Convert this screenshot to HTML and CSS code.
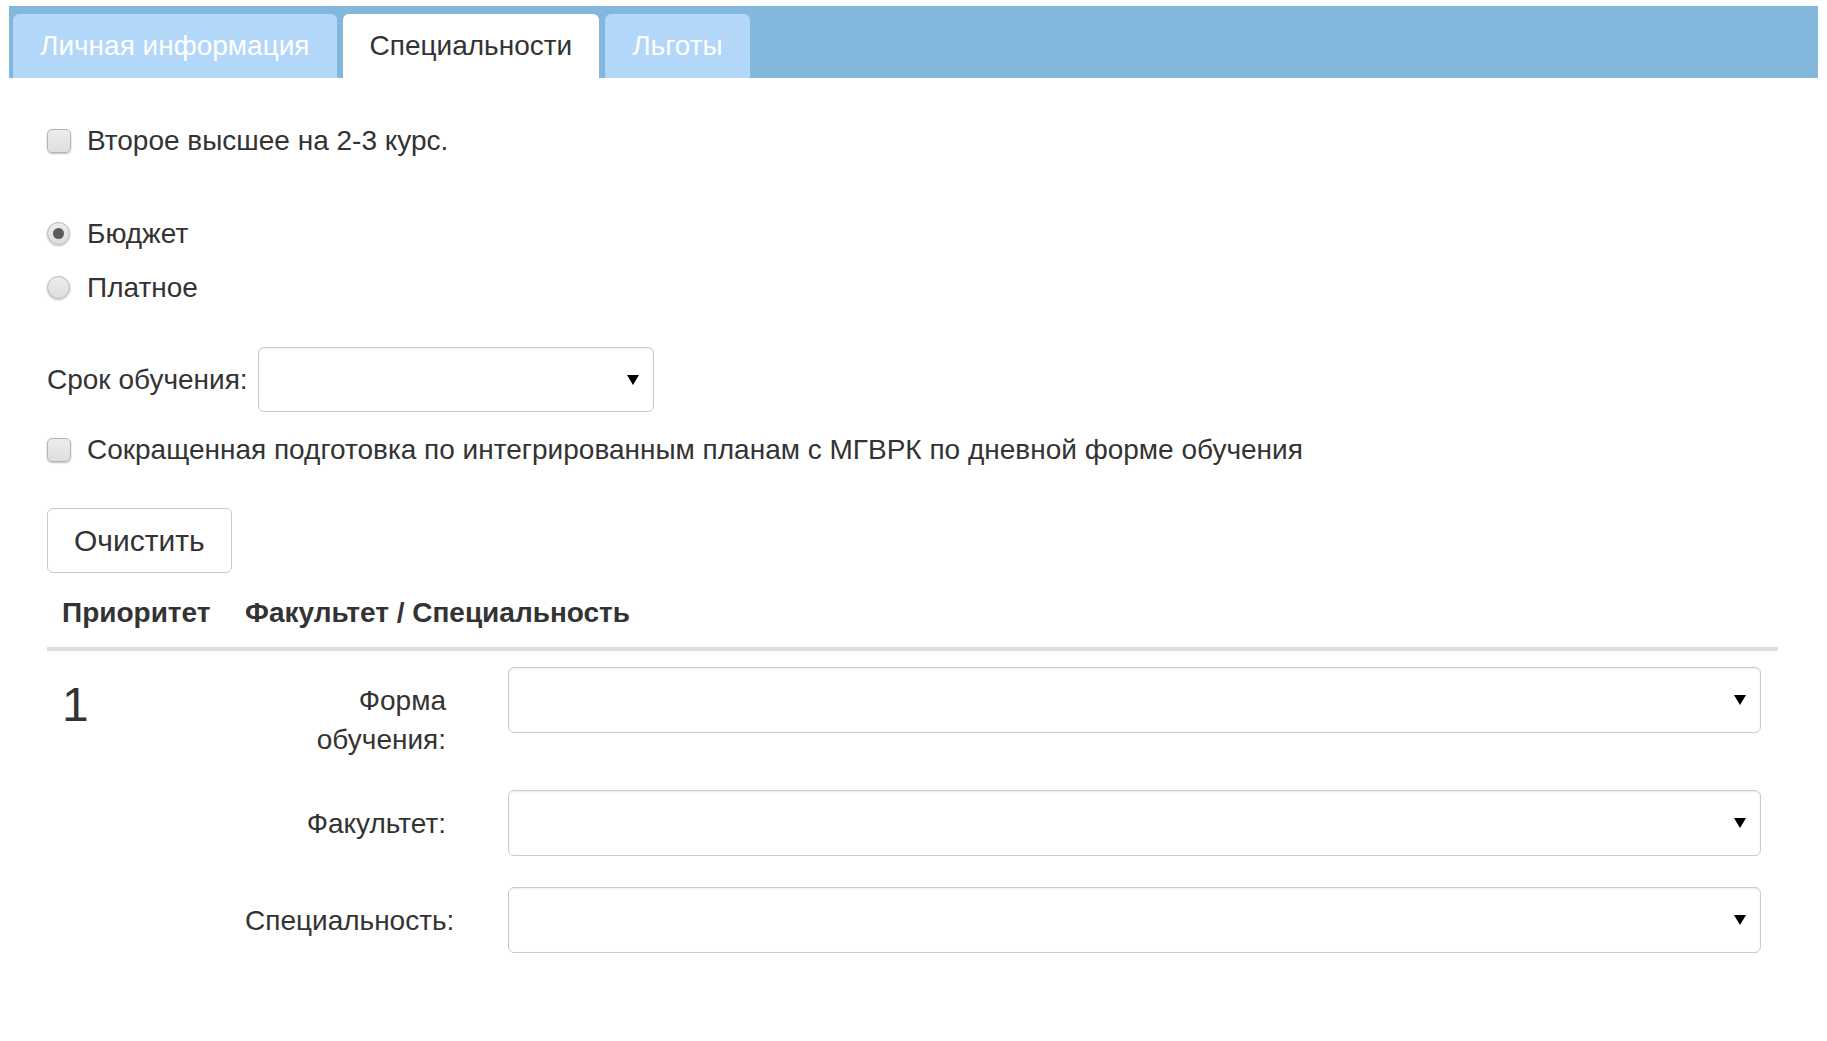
FILE: index.html
```html
<!DOCTYPE html>
<html lang="ru">
<head>
<meta charset="utf-8">
<title>Специальности</title>
<link rel="stylesheet" href="styles.css">
</head>
<body>
<div class="page">
  <ul class="tabs">
    <li class="tab">Личная информация</li>
    <li class="tab active">Специальности</li>
    <li class="tab">Льготы</li>
  </ul>
  <div class="content">
    <label class="line check-line first">
      <input type="checkbox" class="cb">
      <span>Второе высшее на 2-3 курс.</span>
    </label>
    <label class="line radio-line r1">
      <input type="radio" name="pay" class="rb" checked>
      <span>Бюджет</span>
    </label>
    <label class="line radio-line r2">
      <input type="radio" name="pay" class="rb">
      <span>Платное</span>
    </label>
    <div class="term">
      <span class="term-label">Срок обучения:</span>
      <div class="select small">
        <svg class="arrow" width="12" height="10" viewBox="0 0 12 10"><path d="M0 0H12L6 10Z" fill="#000"/></svg>
      </div>
    </div>
    <label class="line check-line c2">
      <input type="checkbox" class="cb">
      <span>Сокращенная подготовка по интегрированным планам с МГВРК по дневной форме обучения</span>
    </label>
    <button class="btn" type="button">Очистить</button>
    <table class="grid">
      <thead>
        <tr><th class="prio">Приоритет</th><th>Факультет / Специальность</th></tr>
      </thead>
      <tbody>
        <tr>
          <td class="num"><div class="n">1</div></td>
          <td>
            <div class="form">
              <div class="flabel">Форма обучения:</div>
              <div class="select">
                <svg class="arrow" width="12" height="10" viewBox="0 0 12 10"><path d="M0 0H12L6 10Z" fill="#000"/></svg>
              </div>
              <div class="flabel">Факультет:</div>
              <div class="select">
                <svg class="arrow" width="12" height="10" viewBox="0 0 12 10"><path d="M0 0H12L6 10Z" fill="#000"/></svg>
              </div>
              <div class="flabel">Специальность:</div>
              <div class="select">
                <svg class="arrow" width="12" height="10" viewBox="0 0 12 10"><path d="M0 0H12L6 10Z" fill="#000"/></svg>
              </div>
            </div>
          </td>
        </tr>
      </tbody>
    </table>
  </div>
</div>
</body>
</html>
```

FILE: styles.css
```css
html, body {
  margin: 0;
  padding: 0;
  background: #fff;
}
body {
  font-family: "Liberation Sans", Arial, sans-serif;
  font-size: 28px;
  line-height: 39px;
  color: #333;
}
.page {
  padding: 6px 9px 0 9px;
}
.tabs {
  list-style: none;
  margin: 0;
  padding: 8px 0 0 4px;
  background: #84b7dc;
  display: flex;
  gap: 6px;
  height: 64px;
}
.tab {
  height: 64px;
  line-height: 64px;
  padding: 0 27px;
  background: #b3d7f8;
  color: #fff;
  border-radius: 6px 6px 0 0;
  font-size: 28px;
}
.tab.active {
  background: #fff;
  color: #333;
}
.content {
  padding: 43px 40px 40px 38px;
}
.line {
  display: flex;
  align-items: center;
  height: 39px;
}
.line.first { margin-top: 0; }
.line.r1 { margin-top: 54px; }
.line.r2 { margin-top: 15px; }
.line.c2 { margin-top: 18px; }
.cb, .rb {
  -webkit-appearance: none;
  appearance: none;
  margin: 0 16px 0 0;
  width: 24px;
  height: 24px;
  flex: none;
  border: 1px solid #b4b4b4;
  background: linear-gradient(#ededed, #dedede);
  box-shadow: 0 1px 2px rgba(0,0,0,0.25);
  box-sizing: border-box;
}
.cb { border-radius: 5px; }
.rb {
  border-radius: 50%;
  width: 23px;
  height: 23px;
  margin-right: 17px;
  position: relative;
}
.rb:checked::after {
  content: "";
  position: absolute;
  left: 5px;
  top: 5px;
  width: 11px;
  height: 11px;
  border-radius: 50%;
  background: #5a5a5a;
}
.term {
  display: flex;
  align-items: center;
  margin-top: 40px;
}
.term-label {
  margin-right: 10px;
}
.select {
  height: 66px;
  box-sizing: border-box;
  border: 1px solid #ccc;
  border-radius: 6px;
  background: #fff;
  box-shadow: inset 0 1px 2px rgba(0,0,0,0.08);
  display: flex;
  align-items: center;
  justify-content: flex-end;
  padding-right: 14px;
}
.select.small {
  width: 396px;
  height: 65px;
}
.arrow { display: block; }
.btn {
  display: block;
  margin-top: 39px;
  height: 65px;
  padding: 0 26px;
  font-family: inherit;
  font-size: 30px;
  color: #333;
  background: #fff;
  border: 1px solid #ccc;
  border-radius: 6px;
}
.grid {
  margin-top: 5px;
  width: 100%;
  border-collapse: collapse;
  table-layout: fixed;
}
.grid th {
  text-align: left;
  font-weight: bold;
  padding: 15px;
  border-bottom: 4px solid #ddd;
  line-height: 39px;
}
.grid th.prio {
  width: 153px;
}
.grid td {
  vertical-align: top;
  padding: 16px 15px 15px 15px;
}
.num .n {
  font-size: 48px;
  line-height: 1;
  margin-top: 14px;
  color: #333;
}
.form {
  display: grid;
  grid-template-columns: 201px 1fr;
  column-gap: 62px;
  row-gap: 31px;
  padding-right: 2px;
}
.flabel {
  text-align: right;
  padding: 14px 0 0 0;
}
```
